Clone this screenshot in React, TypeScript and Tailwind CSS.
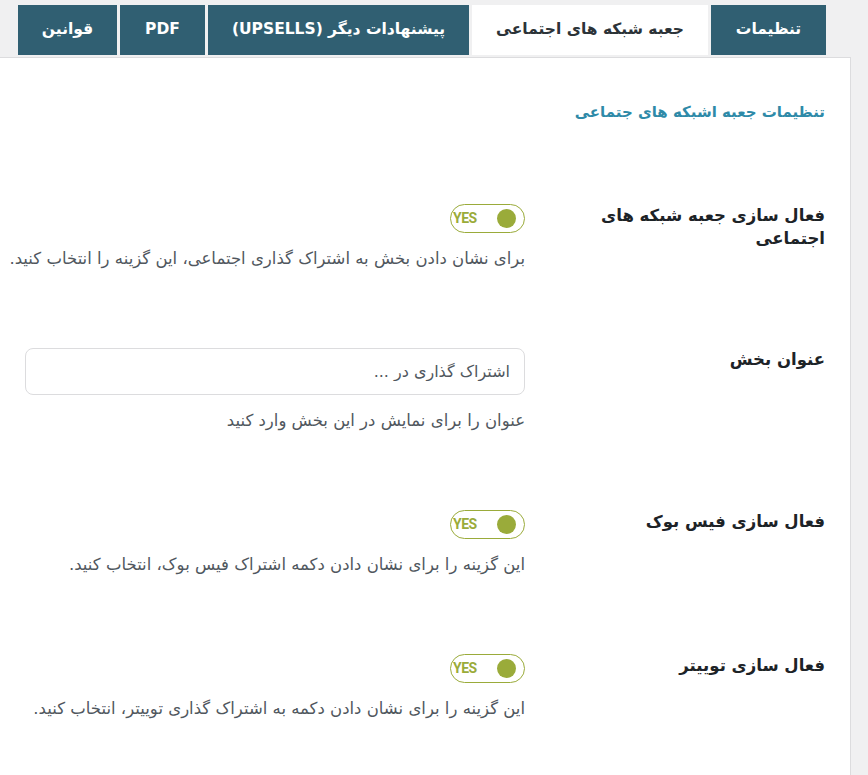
const tabs = [
  { label: 'تنظیمات', active: false, w: 'w-[115px]' },
  { label: 'جعبه شبکه های اجتماعی', active: true, w: 'w-[236px]' },
  { label: 'پیشنهادات دیگر (UPSELLS)', active: false, w: 'w-[261px]' },
  { label: 'PDF', active: false, w: 'w-[85px]' },
  { label: 'قوانین', active: false, w: 'w-[99px]' },
]

function Toggle() {
  return (
    <div className="flex h-[29px] w-[75px] items-center justify-between rounded-full border border-[#9aab3a] bg-white pl-[2px] pr-[8px]" dir="ltr">
      <span className="font-['Roboto'] text-[14px] font-bold tracking-[-0.5px] text-[#9aab3a]">YES</span>
      <span className="h-[19px] w-[19px] rounded-full bg-[#9aab3a]" />
    </div>
  )
}

function Row({
  label,
  desc,
  children,
  className = '',
}: {
  label: string
  desc: string
  children: React.ReactNode
  className?: string
}) {
  return (
    <div className={`flex items-start ${className}`}>
      <div className="w-[225px] shrink-0 text-[16.5px] font-bold leading-[23px] text-[#1d2327]">{label}</div>
      <div className="mr-[75px] flex-1 pl-[10px]">
        {children}
        <p className="mt-[14px] whitespace-nowrap text-[16.5px] leading-[24px] text-[#50575e]">{desc}</p>
      </div>
    </div>
  )
}

export default function App() {
  return (
    <div dir="rtl" className="min-h-screen overflow-hidden bg-[#f0f0f1] font-['DejaVu_Sans',sans-serif]">
      <div className="flex gap-[3px] pr-[42px] pt-[5px]">
        {tabs.map((t) => (
          <div
            key={t.label}
            className={`flex h-[50px] ${t.w} items-center justify-center text-[15.5px] font-bold ${
              t.active ? 'bg-white text-[#2c3338]' : 'bg-[#305f72] text-white'
            }`}
          >
            {t.label}
          </div>
        ))}
      </div>
      <div className="mr-[17px] mt-[2px] min-h-[720px] border border-l-0 border-[#dcdcde] bg-white pr-[25px] pt-[42px]">
        <h2 className="text-[15px] font-bold leading-[24px] text-[#2e8aa8]">تنظیمات جعبه اشبکه های جتماعی</h2>

        <Row
          className="mt-[80px]"
          label="فعال سازی جعبه شبکه های اجتماعی"
          desc="برای نشان دادن بخش به اشتراک گذاری اجتماعی، این گزینه را انتخاب کنید."
        >
          <Toggle />
        </Row>

        <Row className="mt-[77px]" label="عنوان بخش" desc="عنوان را برای نمایش در این بخش وارد کنید">
          <input
            className="h-[47px] w-[500px] rounded-lg border border-[#dcdcde] px-[14px] text-[16px] text-[#50575e] outline-none placeholder:text-[#50575e]"
            placeholder="اشتراک گذاری در ..."
          />
        </Row>

        <Row className="mt-[77px]" label="فعال سازی فیس بوک" desc="این گزینه را برای نشان دادن دکمه اشتراک فیس بوک، انتخاب کنید.">
          <Toggle />
        </Row>

        <Row className="mt-[77px]" label="فعال سازی تویيتر" desc="این گزینه را برای نشان دادن دکمه به اشتراک گذاری توییتر، انتخاب کنید.">
          <Toggle />
        </Row>
      </div>
    </div>
  )
}
